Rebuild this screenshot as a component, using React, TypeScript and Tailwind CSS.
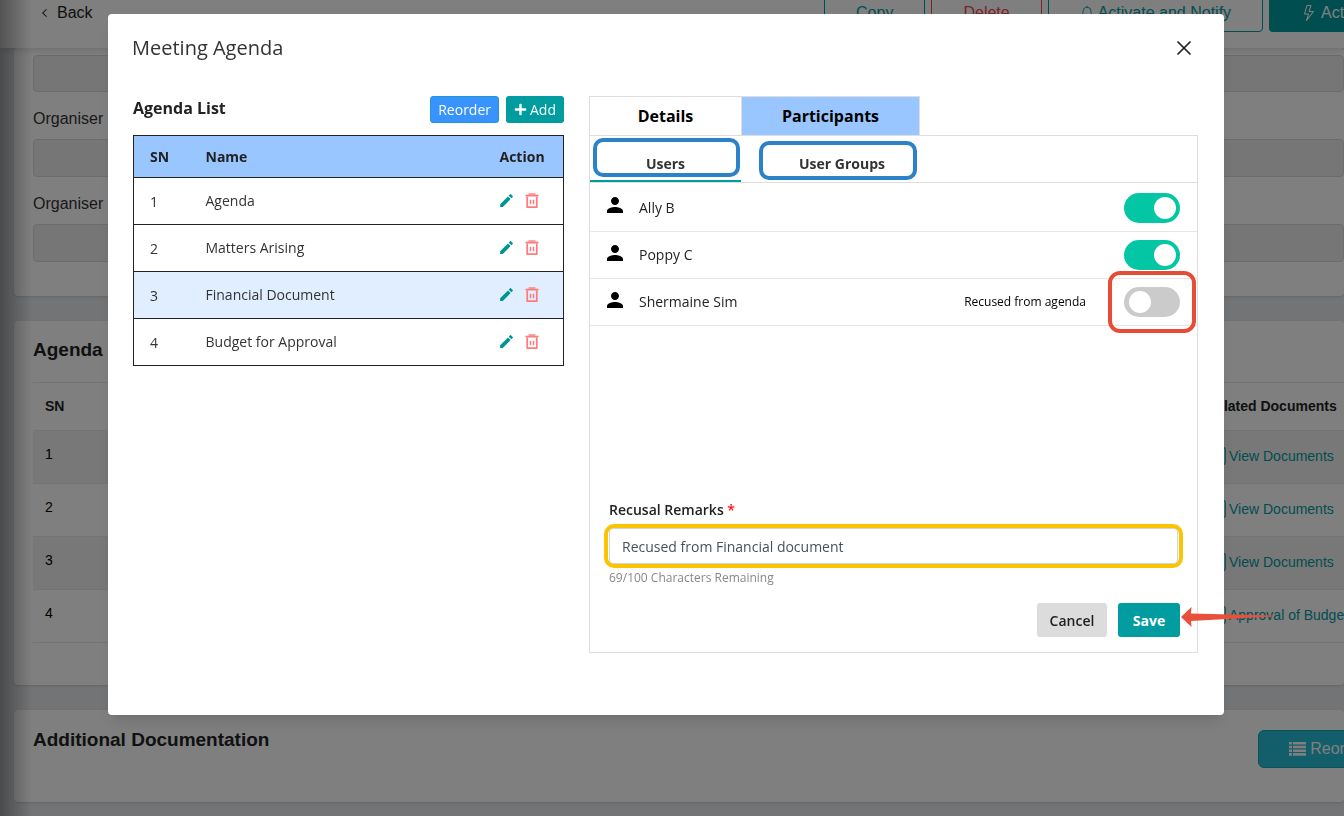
import React, { useState } from 'react';
import { X } from 'lucide-react';
import { BsBell, BsChevronLeft, BsFileText, BsLightning } from 'react-icons/bs';
import { FaPlus } from 'react-icons/fa';
import { MdEdit, MdPerson } from 'react-icons/md';

interface Participant {
  name: string;
  active: boolean;
}

const MAX_REMARKS = 100;

const agendaItems = ['Agenda', 'Matters Arising', 'Financial Document', 'Budget for Approval'];

const relatedDocuments = ['View Documents', 'View Documents', 'View Documents', 'Approval of Budget'];

const TrashIcon: React.FC = () => (
  <svg width="14" height="16" viewBox="0 0 14 16" fill="none" stroke="currentColor" aria-hidden="true">
    <path d="M3.5 1h7" strokeWidth="1.4" />
    <path d="M0.5 2.6h13" strokeWidth="1.8" />
    <path d="M2.2 3.4v10.8h9.6V3.4" strokeWidth="1.7" strokeLinejoin="round" />
    <path d="M5.5 6.8v4.4M8.5 6.8v4.4" strokeWidth="1.5" />
  </svg>
);

const ListIcon: React.FC = () => (
  <svg width="17" height="14" viewBox="0 0 17 14" fill="currentColor" aria-hidden="true">
    <path d="M0 0h3v2.6H0zM4 0h13v2.6H4zM0 3.7h3v2.6H0zM4 3.7h13v2.6H4zM0 7.4h3V10H0zM4 7.4h13V10H4zM0 11.1h3v2.6H0zM4 11.1h13v2.6H4z" />
  </svg>
);

const MeetingPage: React.FC = () => (
  <div className="relative h-screen overflow-hidden bg-[#e4e8ec] font-['Liberation_Sans',Arial,sans-serif] text-base text-[#333]">
    <header className="relative flex h-12 items-end justify-between bg-white pb-4 pl-10 shadow-[0_2px_8px_rgba(0,0,0,0.15)]">
      <a href="#meetings" className="flex h-[38px] items-center gap-2 text-[#222]">
        <BsChevronLeft className="h-3 w-[9px] stroke-1" />
        Back
      </a>
      <div className="-mr-[66px] flex shrink-0 gap-[6px] whitespace-nowrap">
        <button className="h-[38px] rounded border border-[#009c9f] px-[31px] text-[#009c9f]">Copy</button>
        <button className="h-[38px] rounded border border-[#f04a55] px-[31px] text-[#f04a55]">Delete</button>
        <button className="flex h-[38px] items-center gap-1 rounded border border-[#009c9f] px-[31px] text-[#009c9f]">
          <BsBell className="h-4 w-[14px]" />
          Activate and Notify
        </button>
        <button className="flex h-[38px] items-center gap-1 rounded bg-[#009c9f] px-8 text-white">
          <BsLightning className="h-4 w-4" />
          Activate
        </button>
      </div>
    </header>

    <main className="space-y-[25px] pl-[14px]">
      <section className="rounded bg-white pt-[7px] pb-[34px] pl-[19px] shadow-sm">
        <input
          aria-label="Meeting"
          readOnly
          className="block h-[37px] w-full rounded border border-[#d5d8dc] bg-[#eceded]"
        />
        {['organiser-name', 'organiser-email'].map((id) => (
          <div key={id}>
            <label htmlFor={id} className="flex h-[47px] items-center pt-[6px]">
              Organiser
            </label>
            <input
              id={id}
              readOnly
              className="block h-[38px] w-full rounded border border-[#d5d8dc] bg-[#eceded]"
            />
          </div>
        ))}
      </section>

      <section className="rounded bg-white pb-[42px] pl-[19px] shadow-sm">
        <h2 className="flex h-[61px] items-center pb-[2px] text-[19px] font-bold text-[#222]">Agenda</h2>
        <table className="w-[calc(100%+56px)] table-fixed border-collapse text-sm">
          <thead>
            <tr className="h-12 border-t border-[#e6e8ea] text-left text-[#222]">
              <th className="pb-[2px] pl-3">SN</th>
              <th className="w-[194px] pb-[2px]">Related Documents</th>
            </tr>
          </thead>
          <tbody>
            {relatedDocuments.map((doc, index) => (
              <tr key={index} className="h-[53px] border-y border-[#e6e8ea] odd:bg-[#f0f0f0]">
                <td className="pb-[6px] pl-3 text-black">{index + 1}</td>
                <td className="pb-[2px]">
                  <a href="#documents" className="flex items-center gap-px pl-1 text-[#009c9f]">
                    <BsFileText className="h-[18px] w-[18px]" />
                    {doc}
                  </a>
                </td>
              </tr>
            ))}
          </tbody>
        </table>
      </section>

      <section className="flex h-[92px] justify-between rounded bg-white pt-5 pl-[19px] shadow-sm">
        <h2 className="text-[19px] leading-5 font-bold text-[#222]">Additional Documentation</h2>
        <button className="-mr-[55px] flex h-[38px] items-center gap-1 self-start rounded-md border border-[#16a2b4] bg-[#24bcd6] px-[30px] text-white">
          <ListIcon />
          Reorder
        </button>
      </section>
    </main>

    {/* Shadow cast by the collapsed side menu */}
    <div className="absolute inset-y-0 left-0 w-8 bg-gradient-to-r from-black/35 to-transparent" />
  </div>
);

const AgendaList: React.FC = () => {
  const [selected, setSelected] = useState(2);

  return (
    <section>
      <div className="flex h-[39px] justify-between">
        <h3 className="text-base leading-6 font-bold text-[#222]">Agenda List</h3>
        <div className="flex h-[27px] gap-[7px] text-sm text-white">
          <button className="rounded-[3px] border border-[#1f9ad0] bg-[#3893ff] px-[7px]">Reorder</button>
          <button className="flex items-center gap-[3px] rounded-[3px] bg-[#009c9f] px-2">
            <FaPlus className="h-[13px] w-[13px]" />
            Add
          </button>
        </div>
      </div>
      <table className="w-full border-collapse border border-[#222] text-sm text-[#333]">
        <thead>
          <tr className="h-[42px] border border-[#222] bg-[#9ac6ff] text-left text-[#222]">
            <th className="w-14 pl-4">SN</th>
            <th className="pl-4">Name</th>
            <th className="w-20 pl-4">Action</th>
          </tr>
        </thead>
        <tbody>
          {agendaItems.map((item, index) => (
            <tr
              key={item}
              onClick={() => setSelected(index)}
              className={`h-[47px] border border-[#222] ${selected === index ? 'bg-[#e0eeff]' : 'bg-white'}`}
            >
              <td className="pt-px pl-4">{index + 1}</td>
              <td className="pl-4">{item}</td>
              <td className="pl-[14px]">
                <div className="flex items-center gap-[10px] pb-px">
                  <button aria-label={`Edit ${item}`} className="text-[#009590]">
                    <MdEdit className="h-[17px] w-[17px]" />
                  </button>
                  <button aria-label={`Delete ${item}`} className="text-[#ff7b7b]">
                    <TrashIcon />
                  </button>
                </div>
              </td>
            </tr>
          ))}
        </tbody>
      </table>
    </section>
  );
};

const ParticipantsPanel: React.FC = () => {
  const [participants, setParticipants] = useState<Participant[]>([
    { name: 'Ally B', active: true },
    { name: 'Poppy C', active: true },
    { name: 'Shermaine Sim', active: false },
  ]);
  const [remarks, setRemarks] = useState('Recused from Financial document');

  const toggle = (name: string) => {
    setParticipants(participants.map((p) => (p.name === name ? { ...p, active: !p.active } : p)));
  };

  return (
    <section>
      <div className="flex h-10 text-base font-bold text-black">
        <button className="w-[153px] border border-[#dedede] bg-white">Details</button>
        <button className="-ml-px w-[179px] border border-[#dedede] bg-[#9ac6ff]">Participants</button>
      </div>

      <div className="-mt-px border border-[#dedede]">
        <div className="flex h-[47px] border-b border-[#dedede] text-sm font-bold text-[#333]">
          <button className="relative w-[151px] border-b-2 border-[#009c9f] pt-[11px]">
            Users
            <span className="absolute top-[2px] right-px left-[3px] h-[39px] rounded-[10px] border-4 border-[#2b82c9]" />
          </button>
          <button className="relative ml-[18px] w-[158px] pt-[9px] pl-2">
            User Groups
            <span className="absolute inset-x-0 top-[5px] h-[39px] rounded-[10px] border-4 border-[#2b82c9]" />
          </button>
        </div>

        <ul className="h-[312px] text-sm text-[#222]">
          {participants.map((participant) => (
            <li
              key={participant.name}
              className="flex h-[47px] items-center border-b border-[#e6e6e6] pr-[17px] pl-[13px] first:h-[49px] first:pt-px"
            >
              <MdPerson className="mb-[5px] h-6 w-6 text-black" />
              <span className="ml-3">{participant.name}</span>
              {!participant.active && <span className="mr-[38px] ml-auto text-xs text-black">Recused from agenda</span>}
              <span className={`relative flex ${participant.active ? 'ml-auto' : ''}`}>
                <input
                  type="checkbox"
                  role="switch"
                  aria-label={participant.name}
                  checked={participant.active}
                  onChange={() => toggle(participant.name)}
                  className="h-[30px] w-14 appearance-none rounded-full bg-[#cbcbcb] p-1 before:ml-px before:block before:h-[22px] before:w-[22px] before:rounded-full before:bg-white checked:bg-[#03c6a4] checked:before:ml-[26px]"
                />
                {!participant.active && (
                  <span className="pointer-events-none absolute -inset-x-4 -inset-y-4 rounded-[12px] border-4 border-[#e64c38]" />
                )}
              </span>
            </li>
          ))}
        </ul>

        <div className="px-[19px] pb-[15px]">
          <label htmlFor="remarks" className="block h-[33px] pt-[5px] text-sm font-semibold text-[#222]">
            Recusal Remarks <span className="text-[#ff1111]">*</span>
          </label>
          <div className="relative">
            <input
              id="remarks"
              type="text"
              maxLength={MAX_REMARKS}
              value={remarks}
              onChange={(e) => setRemarks(e.target.value)}
              className="block h-9 w-full rounded border border-[#ced4da] px-3 text-sm text-[#495057]"
            />
            <span className="pointer-events-none absolute -inset-x-[5px] -inset-y-1 rounded-[10px] border-4 border-[#fbc400]" />
          </div>
          <p className="mt-1 text-xs leading-5 text-[#888]">
            {MAX_REMARKS - remarks.length}/{MAX_REMARKS} Characters Remaining
          </p>
          <div className="-mr-[2px] mt-[15px] flex h-[34px] justify-end gap-[11px] text-sm">
            <button className="w-[70px] rounded-[3px] bg-[#dcdcdc] pt-px font-semibold text-[#222]">Cancel</button>
            <button className="relative w-[62px] rounded-[3px] bg-[#009c9f] pt-px font-bold text-white">
              Save
              <svg
                className="absolute top-1 left-full ml-px"
                width="94"
                height="20"
                viewBox="0 0 94 20"
                fill="#e8503c"
                aria-hidden="true"
              >
                <path d="M0 10L10.500 0L10 6.500L92 8.600Q94 9.100 92 9.600L10 14L10.500 20Z" />
              </svg>
            </button>
          </div>
        </div>
      </div>
    </section>
  );
};

const App: React.FC = () => {
  return (
    <>
      <MeetingPage />
      <div className="fixed inset-0 overflow-hidden bg-black/50 pt-[14px] pr-[120px] pl-[108px]">
        <div
          role="dialog"
          aria-labelledby="dialog-title"
          className="rounded bg-white pb-[62px] font-['Open_Sans','Noto_Sans',sans-serif] shadow-lg"
        >
          <div className="flex h-[68px] items-center justify-between pr-7 pl-6">
            <h1 id="dialog-title" className="text-xl text-[#333]">
              Meeting Agenda
            </h1>
            <button aria-label="Close" className="text-[#222]">
              <X className="h-6 w-6" strokeWidth={1.75} />
            </button>
          </div>
          <div className="grid grid-cols-[431fr_609fr] gap-[25px] pt-[14px] pr-[26px] pl-[25px]">
            <AgendaList />
            <ParticipantsPanel />
          </div>
        </div>
      </div>
    </>
  );
};

export default App;
